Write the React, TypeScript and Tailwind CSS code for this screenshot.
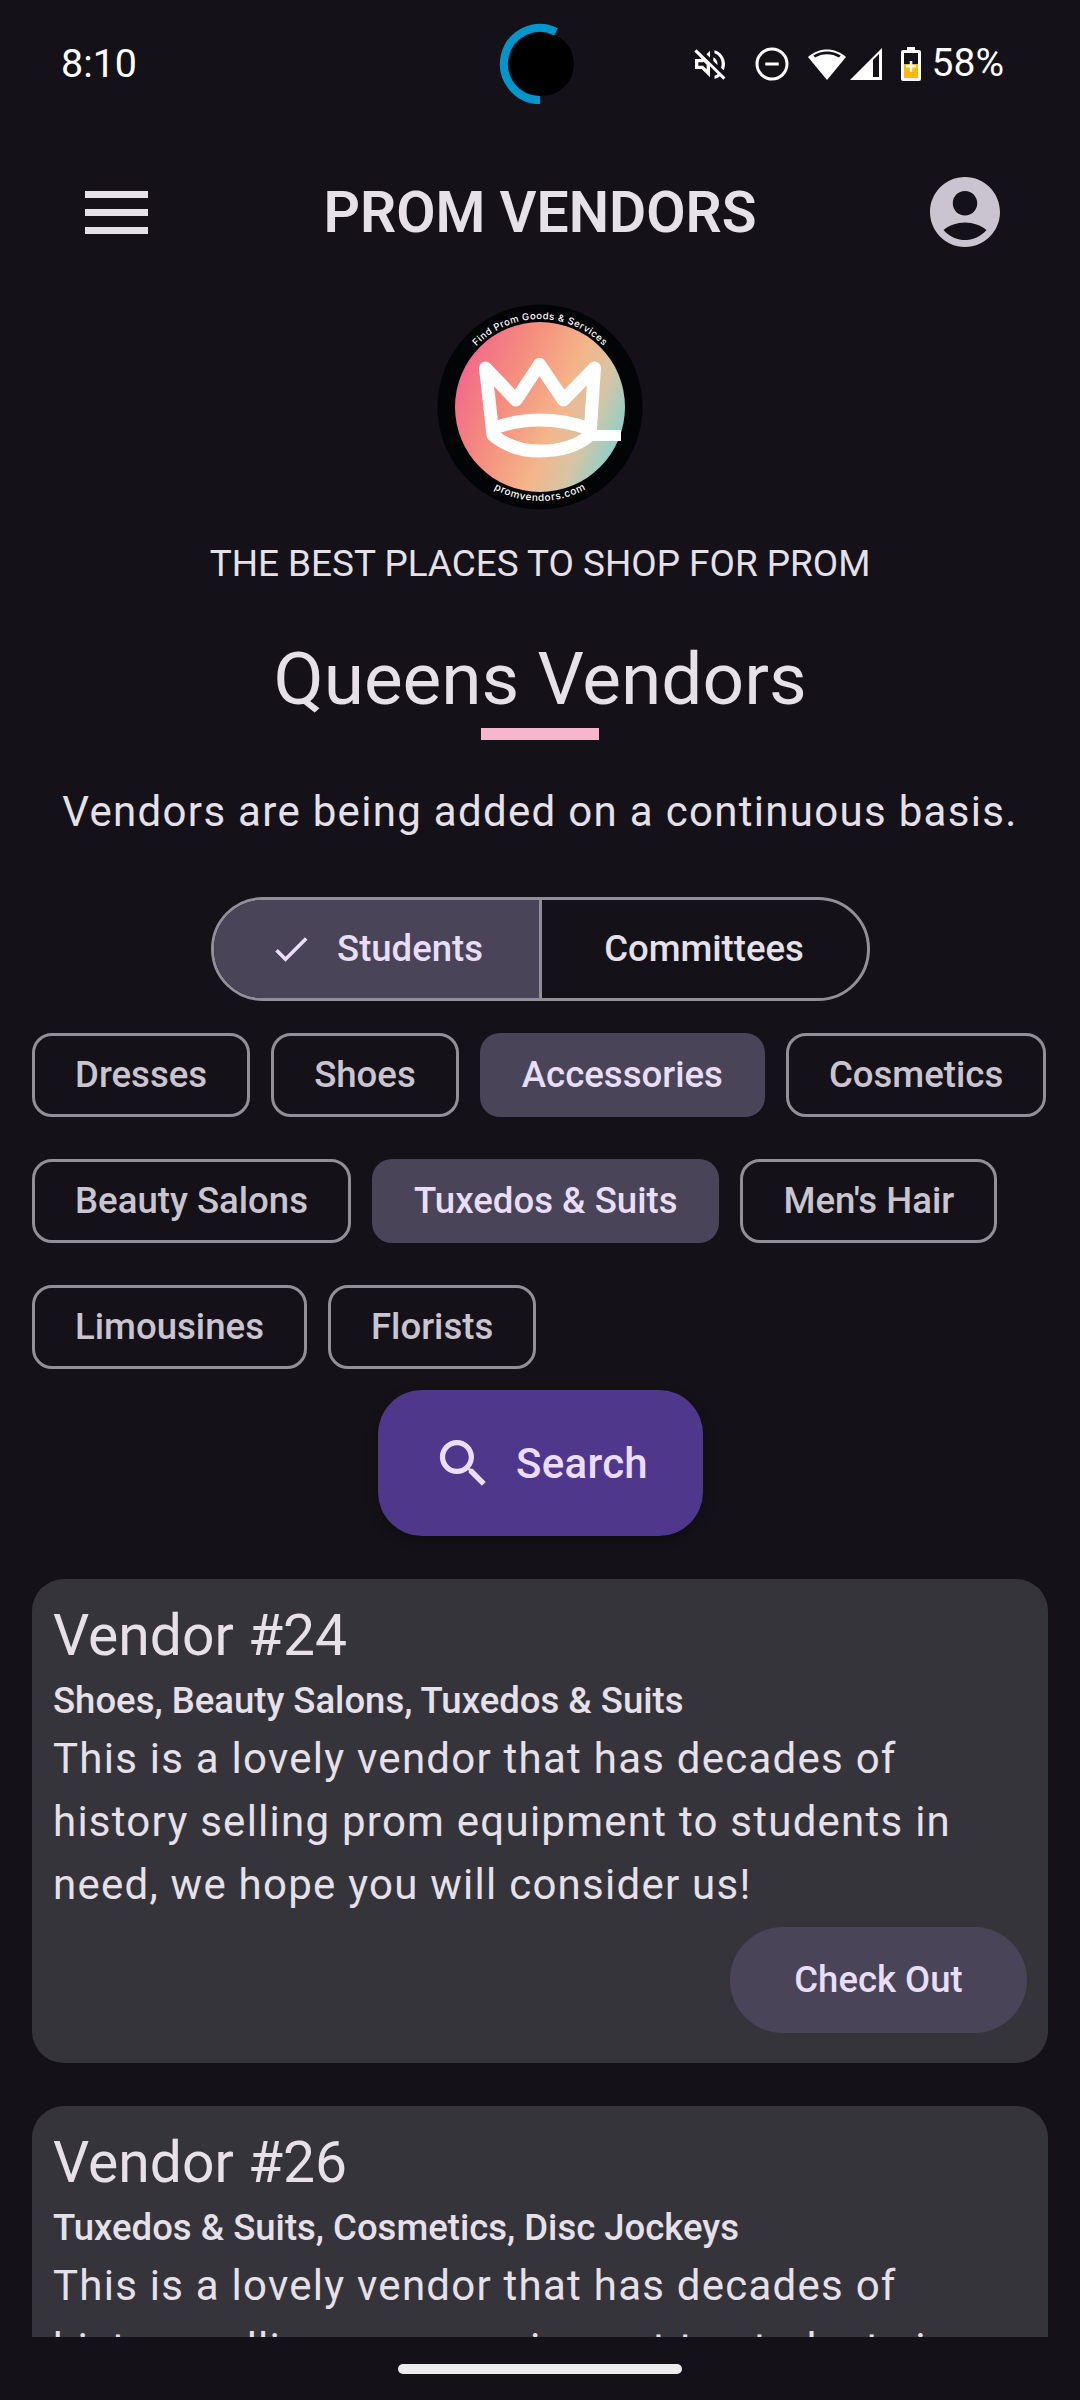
import React from "react";

const F = { fontFamily: 'Roboto, "Noto Sans", sans-serif' } as const;

function Logo() {
  return (
    <svg width="206" height="206" viewBox="0 0 206 206">
      <defs>
        <linearGradient id="g" x1="0" y1="0.3" x2="1" y2="0.72">
          <stop offset="0" stopColor="#f2668c" />
          <stop offset="0.3" stopColor="#f58d7e" />
          <stop offset="0.6" stopColor="#f4b58a" />
          <stop offset="0.78" stopColor="#d6c5a5" />
          <stop offset="1" stopColor="#7fd2cf" />
        </linearGradient>
        <path id="top" d="M 15 103 A 88 88 0 0 1 191 103" />
        <path id="bot" d="M 9 103 A 94 94 0 0 0 197 103" />
      </defs>
      <circle cx="103" cy="103" r="102.5" fill="#030406" />
      <circle cx="103" cy="103" r="85" fill="url(#g)" />
      <g fill="none" stroke="#fff" strokeLinejoin="round">
        <path d="M48.500 64 L56 131 Q75 147 102.500 147 Q135 147 153 131 L157.500 64 L126.500 96 L102.500 60.500 L79 96 Z" strokeWidth="13" />
        <path d="M55 125 Q78 116 102.500 116 Q128 116 153 125" strokeWidth="13" />
        <path d="M156 131.500 H184" strokeWidth="11" />
      </g>
      <text fill="#fff" fontSize="9.500" fontWeight="500" letterSpacing="0.5" style={{ fontFamily: "Inter, sans-serif" }}>
        <textPath href="#top" startOffset="50%" textAnchor="middle">Find Prom Goods &amp; Services</textPath>
      </text>
      <text fill="#fff" fontSize="10" fontWeight="500" letterSpacing="0.6" style={{ fontFamily: "Inter, sans-serif" }}>
        <textPath href="#bot" startOffset="50%" textAnchor="middle">promvendors.com</textPath>
      </text>
    </svg>
  );
}

function StatusIcons() {
  return (
    <div className="flex items-center">
      <svg width="40" height="40" viewBox="0 0 24 24" fill="#fff">
        <path d="M3.900 3.200 2.600 4.500l4.200 4.200-.3.3H3v6h4l5 5v-6.600l4.600 4.600c-.6.4-1.200.8-1.900 1v1.900c1.200-.3 2.300-.8 3.200-1.600l2.100 2.100 1.300-1.300L3.900 3.200zM10 15.200 7.800 13H5v-2h2.800l.4-.4L10 12.400v2.800zM19 12c0 .8-.2 1.600-.4 2.300l1.500 1.500c.6-1.100.9-2.400.9-3.800 0-4-2.700-7.400-6.300-8.300v1.900C17.300 6.500 19 9 19 12zM16.500 12c0-1.800-1-3.300-2.500-4v2.200l2.400 2.400c.1-.2.100-.4.100-.6zM12 4 9.900 6.100 12 8.200V4z" />
      </svg>
      <svg width="36" height="36" viewBox="0 0 24 24" className="ml-[24px]" fill="none" stroke="#fff" strokeWidth="2">
        <circle cx="12" cy="12" r="10" />
        <path d="M7.500 12h9" />
      </svg>
      <svg width="40" height="32" viewBox="0 0 40 32" className="ml-[17px]">
        <path d="M1 9 C12 -1 28 -1 39 9 L20 32 Z" fill="#fff" />
        <path d="M8 9.500 C15 5 25 5 32 9.500 L33.800 7.500 C25 2 15 2 6.300 7.500 Z" fill="#141218" />
      </svg>
      <svg width="32" height="32" viewBox="0 0 32 32" className="ml-[3px]">
        <path d="M0 32 L32 0 V32 Z" fill="#fff" />
        <path d="M23 12 L29 6 V29 H23 Z" fill="#141218" />
      </svg>
      <svg width="20" height="34" viewBox="0 0 20 34" className="ml-[19px]">
        <path d="M6 0h8v3h4a2 2 0 0 1 2 2v27a2 2 0 0 1-2 2H2a2 2 0 0 1-2-2V5a2 2 0 0 1 2-2h4z" fill="#fff" />
        <rect x="3" y="6" width="14" height="25" fill="#141218" />
        <rect x="3" y="17" width="14" height="14" fill="#f9ba0d" />
        <path d="M8.700 14h2.600v4H15v2.500h-3.700v4H8.700v-4H5V18h3.700z" fill="#fff" />
      </svg>
      <span className="ml-[11px] text-[39px] leading-none text-white">58%</span>
    </div>
  );
}

function Chip({ label, active }: { label: string; active?: boolean }) {
  return (
    <div
      className={
        active
          ? "flex h-[84px] items-center whitespace-nowrap rounded-[20px] bg-[#4a4458] px-[42px] text-[36.6px] font-medium text-[#e8def8]"
          : "flex h-[84px] items-center whitespace-nowrap rounded-[20px] border-[3px] border-[#938f99] px-[40px] text-[36.6px] font-medium text-[#cac4d0]"
      }
    >
      {label}
    </div>
  );
}

function Card({ title, tags }: { title: string; tags: string }) {
  return (
    <div className="shrink-0 rounded-[32px] bg-[#36343b] px-[21px] pb-[30px] pt-[26px] text-[#e6e0e9]">
      <div className="text-[57px] leading-[62px] font-normal">{title}</div>
      <div className="mt-[10px] text-[36.5px] leading-[48px] font-medium">{tags}</div>
      <p className="mt-[2px] text-[42px] leading-[63px] tracking-[1.25px]">
        This is a lovely vendor that has decades of history selling prom equipment to students in need, we hope you will consider us!
      </p>
      <div className="mt-[11px] flex justify-end">
        <div className="flex h-[106px] w-[297px] items-center justify-center rounded-full bg-[#4a4458] text-[36.5px] font-medium text-[#e8def8]">
          Check Out
        </div>
      </div>
    </div>
  );
}

export default function App() {
  return (
    <div className="flex h-[2400px] w-[1080px] flex-col overflow-hidden bg-[#141218]" style={F}>
      <div className="relative flex h-[126px] shrink-0 items-center justify-between pl-[61px] pr-[76px] pt-[1px]">
        <span className="text-[39.4px] leading-none text-white">8:10</span>
        <svg width="80" height="84" viewBox="0 0 80 84" className="absolute left-[499px] top-[22px]">
          <circle cx="43" cy="42" r="32" fill="#000" />
          <path d="M57 9.800 A 36 36 0 1 0 41 78" fill="none" stroke="#0096cc" strokeWidth="8" />
        </svg>
        <StatusIcons />
      </div>

      <div className="flex h-[172px] shrink-0 items-center pl-[85px] pr-[73px]">
        <div className="w-[72px] shrink-0">
          <div className="flex w-[63px] flex-col gap-[11px]">
            <div className="h-[7px] bg-[#e6e0e9]" />
            <div className="h-[7px] bg-[#e6e0e9]" />
            <div className="h-[7px] bg-[#e6e0e9]" />
          </div>
        </div>
        <div className="flex-1 text-center text-[57px] leading-none font-semibold text-[#e6e0e9]">PROM VENDORS</div>
        <svg width="84" height="84" viewBox="0 0 24 24" fill="#cac4d0">
          <path d="M12 2C6.480 2 2 6.480 2 12s4.480 10 10 10 10-4.480 10-10S17.520 2 12 2zm0 4c1.930 0 3.500 1.570 3.500 3.500S13.930 13 12 13s-3.500-1.570-3.500-3.500S10.070 6 12 6zm0 14c-2.030 0-4.430-.82-6.140-2.880C7.550 15.800 9.680 15 12 15s4.450.8 6.140 2.120C16.430 19.180 14.030 20 12 20z" />
        </svg>
      </div>

      <div className="flex shrink-0 justify-center pt-[6px]">
        <Logo />
      </div>
      <div className="mt-[32px] text-center text-[36.9px] leading-[44px] text-[#e6e0e9]">THE BEST PLACES TO SHOP FOR PROM</div>

      <div className="mt-[51px] text-center text-[73px] leading-[84px] text-[#e6e0e9]">Queens Vendors</div>
      <div className="mx-auto mt-[7px] h-[12px] w-[118px] bg-[#f8b6cc]" />
      <div className="mt-[48px] text-center text-[42px] leading-[48px] tracking-[1.31px] text-[#e6e0e9]">
        Vendors are being added on a continuous basis.
      </div>

      <div className="mx-auto mt-[61px] flex h-[104px] w-[659px] shrink-0 overflow-hidden rounded-full border-[3px] border-[#938f99]">
        <div className="flex w-[328px] items-center justify-center gap-[24px] border-r-[3px] border-[#938f99] bg-[#4a4458] text-[36.5px] font-medium text-[#e8def8]">
          <svg width="44" height="44" viewBox="0 0 24 24" fill="#e8def8">
            <path d="M9 16.170 4.830 12l-1.420 1.410L9 19 21 7l-1.410-1.410z" />
          </svg>
          Students
        </div>
        <div className="flex flex-1 items-center justify-center text-[36.5px] font-medium text-[#e6e0e9]">Committees</div>
      </div>

      <div className="mt-[32px] flex flex-col gap-[42px] px-[32px]">
        <div className="flex gap-[21px]">
          <Chip label="Dresses" />
          <Chip label="Shoes" />
          <Chip label="Accessories" active />
          <Chip label="Cosmetics" />
        </div>
        <div className="flex gap-[21px]">
          <Chip label="Beauty Salons" />
          <Chip label="Tuxedos & Suits" active />
          <Chip label="Men's Hair" />
        </div>
        <div className="flex gap-[21px]">
          <Chip label="Limousines" />
          <Chip label="Florists" />
        </div>
      </div>

      <div className="mx-auto mt-[21px] flex h-[146px] w-[325px] shrink-0 items-center justify-center gap-[21px] rounded-[44px] bg-[#4f378b] text-[42px] tracking-[0.26px] font-medium text-[#eaddff] shadow-[0_4px_12px_rgba(0,0,0,0.3)]">
        <svg width="63" height="63" viewBox="0 0 24 24" fill="#eaddff">
          <path d="M15.500 14h-.79l-.28-.27C15.410 12.590 16 11.110 16 9.500 16 5.910 13.090 3 9.500 3S3 5.910 3 9.500 5.910 16 9.500 16c1.610 0 3.090-.59 4.230-1.570l.27.28v.79l5 4.990L20.490 19l-4.990-5zm-6 0C7.010 14 5 11.990 5 9.500S7.010 5 9.500 5 14 7.010 14 9.500 11.990 14 9.500 14z" />
        </svg>
        Search
      </div>

      <div className="mt-[43px] flex h-[758px] shrink-0 flex-col gap-[43px] overflow-hidden px-[32px]">
        <Card title="Vendor #24" tags="Shoes, Beauty Salons, Tuxedos & Suits" />
        <Card title="Vendor #26" tags="Tuxedos & Suits, Cosmetics, Disc Jockeys" />
      </div>

      <div className="mx-auto mt-[27px] h-[10px] w-[284px] shrink-0 rounded-full bg-[#ececec]" />
    </div>
  );
}
